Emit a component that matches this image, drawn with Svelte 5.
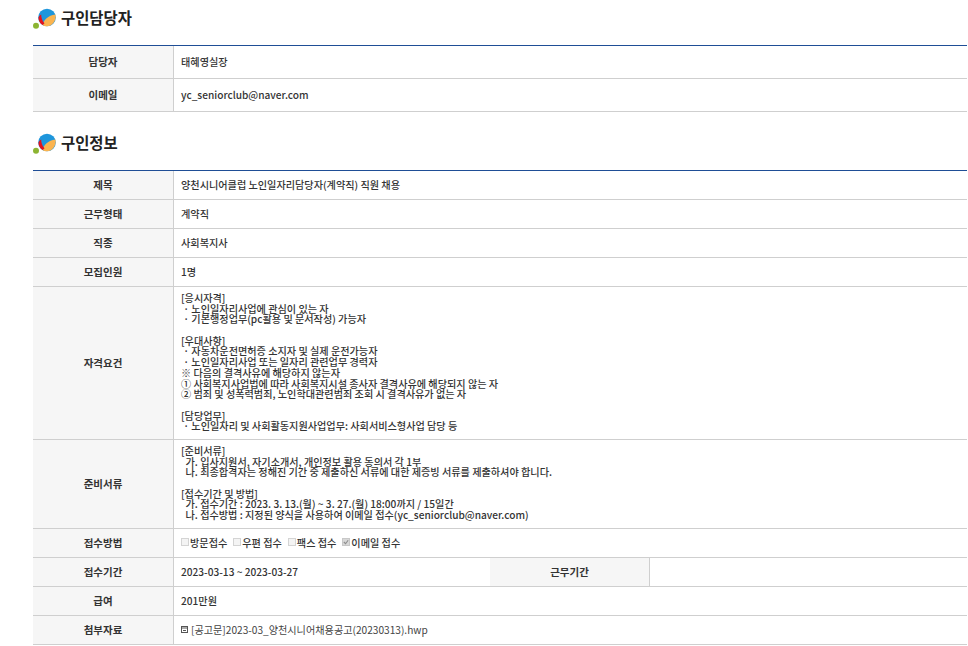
<script>
  const contact = [
    { h: '담당자', v: '태혜영실장' },
    { h: '이메일', v: 'yc_seniorclub@naver.com' }
  ];
  const qual = ['[응시자격]',' · 노인일자리사업에 관심이 있는 자',' · 기본행정업무(pc활용 및 문서작성) 가능자','','[우대사항]',' · 자동차운전면허증 소지자 및 실제 운전가능자',' · 노인일자리사업 또는 일자리 관련업무 경력자','※ 다음의 결격사유에 해당하지 않는자','① 사회복지사업법에 따라 사회복지시설 종사자 결격사유에 해당되지 않는 자','② 범죄 및 성폭력범죄, 노인학대관련범죄 조회 시 결격사유가 없는 자','','[담당업무]',' · 노인일자리 및 사회활동지원사업업무: 사회서비스형사업 담당 등'];
  const docs = ['[준비서류]','  가. 입사지원서, 자기소개서, 개인정보 활용 동의서 각 1부','  나. 최종합격자는 정해진 기간 중 제출하신 서류에 대한 제증빙 서류를 제출하셔야 합니다.','','[접수기간 및 방법]','  가. 접수기간 : 2023. 3. 13.(월) ~ 3. 27.(월) 18:00까지 / 15일간','  나. 접수방법 : 지정된 양식을 사용하여 이메일 접수(yc_seniorclub@naver.com)'];
  const methods = [['방문접수',false],['우편 접수',false],['팩스 접수',false],['이메일 접수',true]];
</script>

{#snippet logo()}
  <svg class="logo" width="24" height="21" viewBox="0 0 24 21">
    <circle cx="14" cy="9.500" r="8.800" fill="#1e96dc"/>
    <path d="M9.500 17 C10.500 12 15 7.500 22.500 6.500 C23.500 12 19.500 18.300 14 18.300 C12 18.300 10.500 17.800 9.500 17Z" fill="#fbb450"/>
    <path d="M5.500 11 C5.300 9 6.500 7 8.200 6.500 C8 9.500 9.500 13 11.500 15.300 L9.800 17 C7.500 16 6 13.500 5.500 11Z" fill="#e1141e"/>
    <circle cx="3" cy="17.700" r="3" fill="#8cb432"/>
  </svg>
{/snippet}

<main>
  <h2 class="first">{@render logo()}구인담당자</h2>
  <section>
    {#each contact as c}
      <div class="row tall">
        <div class="th">{c.h}</div>
        <div class="td">{c.v}</div>
      </div>
    {/each}
  </section>

  <h2 class="second">{@render logo()}구인정보</h2>
  <section>
    <div class="row"><div class="th">제목</div><div class="td">양천시니어클럽 노인일자리담당자(계약직) 직원 채용</div></div>
    <div class="row"><div class="th">근무형태</div><div class="td">계약직</div></div>
    <div class="row"><div class="th">직종</div><div class="td">사회복지사</div></div>
    <div class="row"><div class="th">모집인원</div><div class="td">1명</div></div>
    <div class="row q"><div class="th">자격요건</div><div class="td pre">{#each qual as l}<div class="ln">{l || ' '}</div>{/each}</div></div>
    <div class="row d"><div class="th">준비서류</div><div class="td pre">{#each docs as l}<div class="ln">{l || ' '}</div>{/each}</div></div>
    <div class="row">
      <div class="th">접수방법</div>
      <div class="td methods">
        {#each methods as m}
          <span class="m"><span class="cb" class:on={m[1]}>{#if m[1]}<svg width="6" height="6" viewBox="0 0 7 7"><path d="M1 3.500 L3 5.500 L6 1.500" fill="none" stroke="#8d8d8d" stroke-width="1.300"/></svg>{/if}</span>{m[0]}</span>
        {/each}
      </div>
    </div>
    <div class="row">
      <div class="th">접수기간</div>
      <div class="td half">2023-03-13 ~ 2023-03-27</div>
      <div class="th mid">근무기간</div>
      <div class="td"></div>
    </div>
    <div class="row"><div class="th">급여</div><div class="td">201만원</div></div>
    <div class="row">
      <div class="th">첨부자료</div>
      <div class="td file">
        <svg width="7" height="7" viewBox="0 0 7 7"><rect x="0.500" y="0.500" width="6" height="6" fill="none" stroke="#555"/><path d="M0.500 2 H6.500 M2 4.500 H5" stroke="#555" stroke-width="1"/></svg>
        <span>[공고문]2023-03_양천시니어채용공고(20230313).hwp</span>
      </div>
    </div>
  </section>
</main>

<style>
  :global(body) { margin: 0; background: #fff; }
  main {
    width: 968px;
    height: 646px;
    overflow: hidden;
    padding-left: 33px;
    box-sizing: border-box;
    font-family: "Noto Sans CJK KR", sans-serif;
    font-size: 10.150px;
    color: #333;
  }
  h2 {
    margin: 0;
    display: flex;
    align-items: center;
    gap: 4px;
    font-size: 15.400px;
    font-weight: 700;
    color: #222;
    height: 24px;
  }
  .logo { flex: none; margin-top: 3px; }
  h2.first { padding-top: 5px; padding-bottom: 16px; }
  h2.second { padding-top: 18px; padding-bottom: 16px; }
  section { border-top: 1px solid #1f4e96; width: 934px; }
  .row {
    display: flex;
    height: 29px;
    box-sizing: border-box;
    border-bottom: 1px solid #cfcfcf;
  }
  .tall { height: 33px; }
  .q { height: 153px; }
  .d { height: 89px; }
  .th {
    width: 141px;
    flex: none;
    box-sizing: border-box;
    background: #f6f6f6;
    border-right: 1px solid #cfcfcf;
    display: flex;
    align-items: center;
    justify-content: center;
    padding-bottom: 2px;
    font-weight: 700;
    font-size: 10.500px;
    color: #333;
  }
  .th.mid { width: 160px; }
  .td {
    flex: 1;
    min-width: 0;
    display: flex;
    align-items: center;
    padding-left: 7px;
    padding-bottom: 2px;
    font-weight: 500;
    color: #333;
  }
  .td.half { flex: none; width: 316px; box-sizing: border-box; }
  .td.pre { display: block; padding-top: 6px; padding-bottom: 0; }
  .ln { white-space: pre; line-height: 10.700px; height: 10.700px; }
  .methods { gap: 6px; }
  .m { display: inline-flex; align-items: center; }
  .cb {
    width: 6px;
    height: 6px;
    border: 1px solid #d4d4d4;
    background: #f4f4f4;
    margin-right: 1px;
    display: inline-flex;
  }
  .cb.on { background: #d8d8d8; border-color: #c8c8c8; }
  .file { gap: 3px; font-weight: 400; color: #444; }
</style>
